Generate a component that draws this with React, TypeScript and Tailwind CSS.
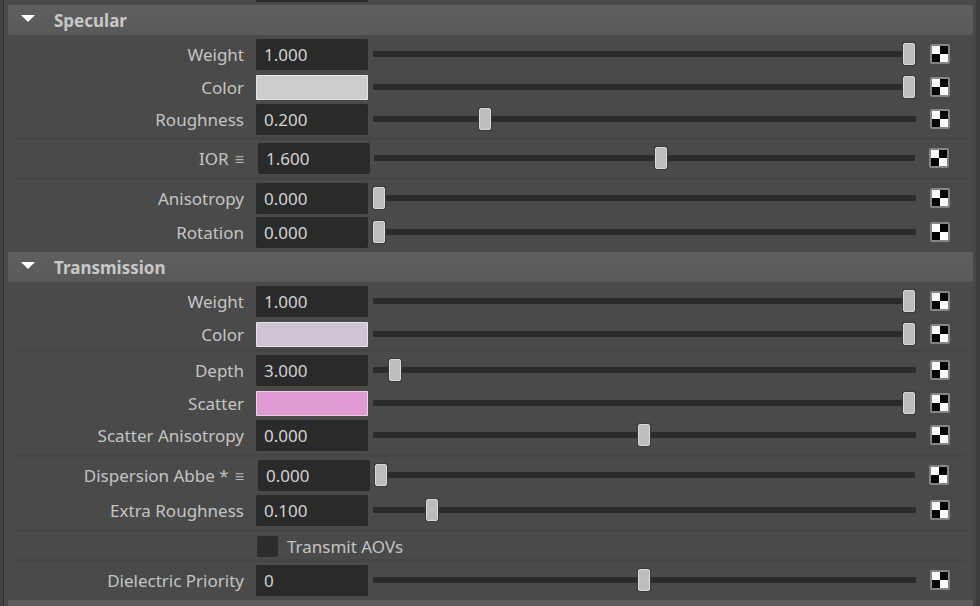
import React from "react";

type RowProps = {
  label: string;
  value?: string;
  swatch?: string;
  thumb: number;
  menu?: boolean;
  shift?: boolean;
  rule?: boolean;
  className: string;
};

function Checker() {
  return (
    <div className="ml-[14px] mb-[1px] grid h-[20px] w-[20px] shrink-0 grid-cols-2 rounded-[2px] border-2 border-[#858585]">
      <div className="bg-white" />
      <div className="bg-black" />
      <div className="bg-black" />
      <div className="bg-white" />
    </div>
  );
}

function Row({ label, value, swatch, thumb, menu, shift, rule, className }: RowProps) {
  return (
    <div className={"relative flex h-[31px] items-center " + className}>
      {rule && <div className="absolute left-[7px] right-[7px] top-[-6px] h-[3px] bg-[#454545]" />}
      <div className="mt-[1px] flex w-[236px] shrink-0 items-center justify-end text-[17px] text-[#c4c4c4]">
        {label}
        {menu && <span className="ml-[6px] text-[16px] text-[#b5b5b5]">≡</span>}
      </div>
      <div className={shift ? "ml-[14px] w-[112px] shrink-0" : "ml-[12px] w-[112px] shrink-0"}>
        {swatch ? (
          <div className="h-[25px] rounded-[1px] border border-white/50" style={{ backgroundColor: swatch }} />
        ) : (
          <div className="flex h-[31px] items-center rounded-[2px] bg-[#2a2a2a] pl-[8px] text-[17px] text-[#d2d2d2]">
            {value}
          </div>
        )}
      </div>
      <div className={shift ? "relative mb-[1px] ml-[4px] h-[6px] w-[541px] rounded-[1px] bg-[#2b2b2b]" : "relative mb-[1px] ml-[5px] h-[6px] w-[543px] rounded-[1px] bg-[#2b2b2b]"}>
        <div
          className="absolute top-[-8px] h-[22px] w-[12px] rounded-[2px] border border-[#d8d8d8] bg-[#bdbdbd] shadow-[0_0_0_1px_#3a3a3a]"
          style={{ left: thumb }}
        />
      </div>
      <Checker />
    </div>
  );
}

function Header({ title, className }: { title: string; className: string }) {
  return (
    <div className={"flex h-[30px] items-center rounded-[2px] bg-linear-to-b from-[#5f5f5f] to-[#595959] " + className}>
      <div className="mb-[3px] ml-[13px] h-0 w-0 border-x-[7px] border-t-[7px] border-x-transparent border-t-white" />
      <div className="ml-[19px] mt-[2px] text-[17px] font-bold text-[#c8c8c8]">{title}</div>
    </div>
  );
}

export default function App() {
  return (
    <div className="flex h-[606px] w-[980px] overflow-hidden bg-[#4a4a4a] font-['Noto_Sans','Open_Sans',sans-serif]">
      {/* left window edge */}
      <div className="w-[3px] shrink-0 bg-[#424242]" />
      <div className="w-[1px] shrink-0 bg-[#2f2f2f]" />
      <div className="w-[4px] shrink-0" />

      <div className="w-[965px] shrink-0">
        {/* bottom of the field from the section above */}
        <div className="ml-[248px] h-[2px] w-[112px] bg-[#2a2a2a]" />
        <Header title="Specular" className="mt-[3px]" />
        <Row label="Weight" value="1.000" thumb={530} className="mt-[4px]" />
        <Row label="Color" swatch="#cdcdcd" thumb={530} className="mt-[2px]" />
        <Row label="Roughness" value="0.200" thumb={106} className="mt-[1px]" />
        <Row label="IOR" menu shift value="1.600" thumb={281} rule className="mt-[8px]" />
        <Row label="Anisotropy" value="0.000" thumb={0} rule className="mt-[9px]" />
        <Row label="Rotation" value="0.000" thumb={0} className="mt-[3px]" />
        <Header title="Transmission" className="mt-[4px]" />
        <Row label="Weight" value="1.000" thumb={530} className="mt-[4px]" />
        <Row label="Color" swatch="#cfc3d6" thumb={530} className="mt-[2px]" />
        <Row label="Depth" value="3.000" thumb={16} rule className="mt-[5px]" />
        <Row label="Scatter" swatch="#de9bd1" thumb={530} className="mt-[2px]" />
        <Row label="Scatter Anisotropy" value="0.000" thumb={265} className="mt-[1px]" />
        <Row label="Dispersion Abbe *" menu shift value="0.000" thumb={1} rule className="mt-[9px]" />
        <Row label="Extra Roughness" value="0.100" thumb={53} className="mt-[4px]" />
        <div className="relative mt-[9px] flex h-[22px] items-center">
          <div className="absolute left-[7px] right-[7px] top-[-6px] h-[3px] bg-[#454545]" />
          <div className="ml-[249px] h-[21px] w-[21px] rounded-[2px] bg-[#2d2d2d]" />
          <span className="ml-[9px] mt-[2px] text-[17px] text-[#c4c4c4]">Transmit AOVs</span>
        </div>
        <Row label="Dielectric Priority" value="0" thumb={265} rule className="mt-[8px]" />
        <div className="mt-[4px] h-[10px] rounded-[2px] bg-[#5d5d5d]" />
      </div>

      {/* right scroll gutter */}
      <div className="w-[3px] shrink-0 bg-[#474747]" />
      <div className="w-[4px] shrink-0 bg-[#3d3d3d]" />
    </div>
  );
}
